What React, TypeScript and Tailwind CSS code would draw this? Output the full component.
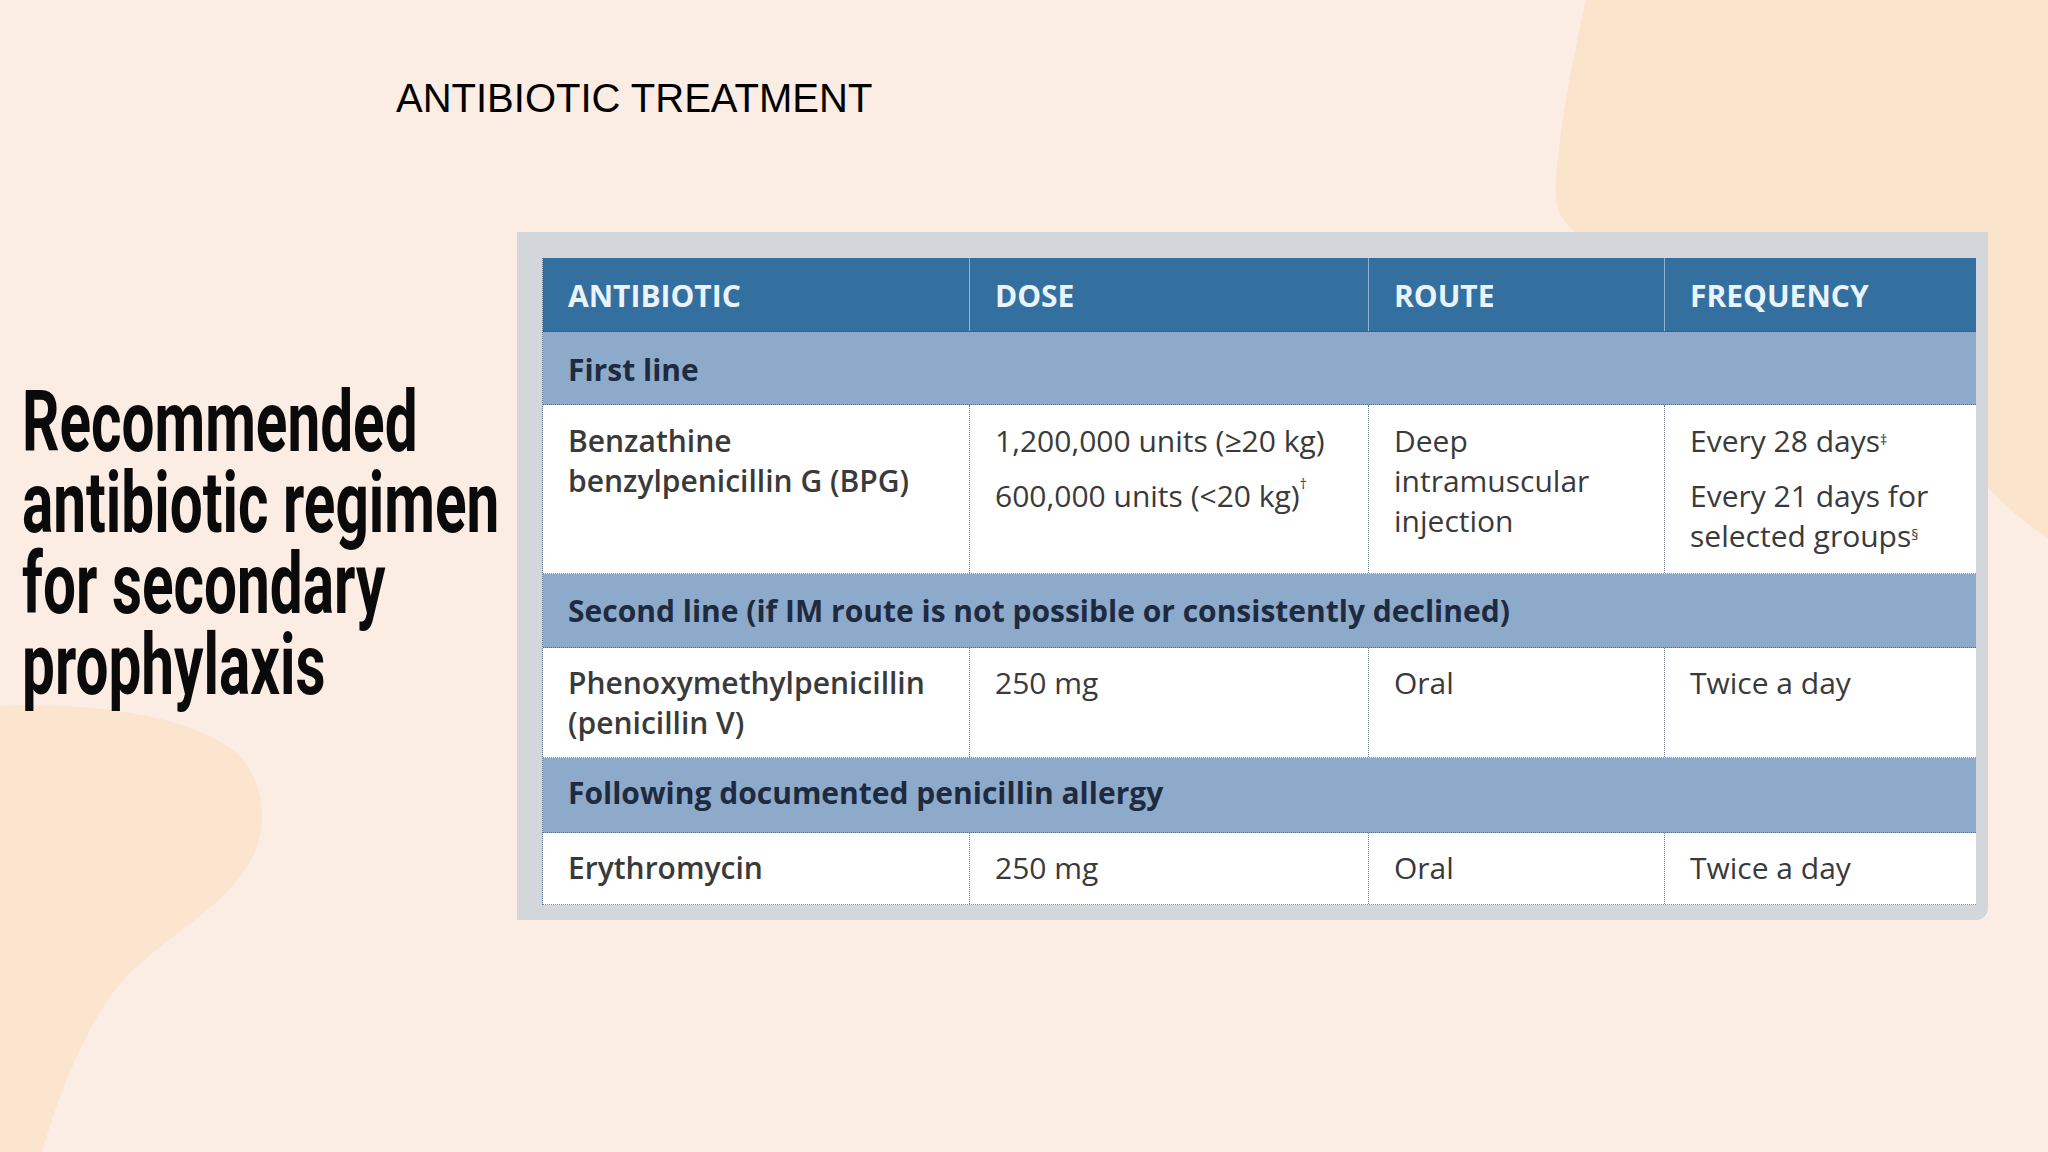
import React from "react";

const bodyFont = { fontFamily: '"Open Sans", "Liberation Sans", sans-serif' };

function Row({
  h,
  pt,
  cells,
  white = true,
}: {
  h: string;
  pt: string;
  cells: React.ReactNode[];
  white?: boolean;
}) {
  return (
    <div className={`grid grid-cols-[426px_399px_296px_313px] ${h} bg-white border-b border-dotted border-[#7d8a97]`}>
      {cells.map((c, i) => (
        <div
          key={i}
          className={`${pt} px-[25px] text-[30px] leading-[40px] text-[#3a3a3a] whitespace-nowrap ${
            i > 0 ? "border-l border-dotted border-[#6f7c88]" : ""
          } ${i === 0 ? "font-semibold text-[#2c2c2c]" : "font-normal"}`}
        >
          {c}
        </div>
      ))}
    </div>
  );
}

function Band({ h, pt, text }: { h: string; pt: string; text: string }) {
  return (
    <div className={`${h} ${pt} px-[25px] bg-[#8eaacb] border-b border-dotted border-[#5d6f82] text-[30px] leading-[40px] font-bold text-[#1d2a3f] whitespace-nowrap`}>
      {text}
    </div>
  );
}

export default function App() {
  return (
    <div className="relative w-[2048px] h-[1152px] overflow-hidden bg-[#fbede3]">
      <svg
        className="absolute inset-0"
        width="2048"
        height="1152"
        viewBox="0 0 2048 1152"
      >
        <path
          d="M1586,0 C1575,50 1560,120 1556,180 C1553,215 1565,228 1595,245 L1700,300 C1850,360 1950,450 1995,495 C2015,515 2035,530 2048,538 L2048,0 Z"
          fill="#fbe4cc"
        />
        <path
          d="M0,706 C90,702 190,715 235,752 C268,780 270,835 245,870 C215,915 150,945 115,990 C85,1030 60,1090 42,1152 L0,1152 Z"
          fill="#fbe5cf"
        />
      </svg>

      <div className="relative flex flex-col">
        <div
          className="pt-[78px] pl-[396px] text-[40px] leading-[40px] text-black"
          style={{ fontFamily: '"Liberation Sans", Arial, sans-serif' }}
        >
          ANTIBIOTIC TREATMENT
        </div>

        <div className="mt-[114px] flex pl-[22px]">
          <div className="w-[495px] pt-[149px]">
            <div
              className="origin-left scale-x-[0.68] text-[86px] leading-[81px] font-bold text-[#0a0a0a] whitespace-nowrap"
              style={{ fontFamily: 'Roboto, "Liberation Sans", sans-serif' }}
            >
              Recommended
              <br />
              antibiotic regimen
              <br />
              for secondary
              <br />
              prophylaxis
            </div>
          </div>

          <div
            className="w-[1471px] h-[688px] bg-[#d3d6db] rounded-br-[12px] pl-[25px] pt-[26px] pr-[12px] pb-[15px]"
            style={bodyFont}
          >
            <div className="w-[1434px] flex flex-col border-l border-dotted border-[#5d6f82]">
              <div className="grid grid-cols-[426px_399px_296px_313px] h-[74px] bg-[#34709f] border-b border-dotted border-[#28577d]">
                {["ANTIBIOTIC", "DOSE", "ROUTE", "FREQUENCY"].map((t, i) => (
                  <div
                    key={t}
                    className={`pt-[18px] px-[25px] text-[30px] leading-[40px] font-bold text-[#eaf3fa] ${
                      i > 0 ? "border-l border-[#8fb2d0]" : ""
                    }`}
                  >
                    {t}
                  </div>
                ))}
              </div>

              <Band h="h-[73px]" pt="pt-[18px]" text="First line" />

              <Row
                h="h-[169px]"
                pt="pt-[16px]"
                cells={[
                  <>
                    Benzathine
                    <br />
                    benzylpenicillin G (BPG)
                  </>,
                  <>
                    <div>1,200,000 units (≥20 kg)</div>
                    <div className="mt-[15px]">
                      600,000 units (&lt;20 kg)
                      <sup className="text-[14px] align-super leading-none">†</sup>
                    </div>
                  </>,
                  <>
                    Deep
                    <br />
                    intramuscular
                    <br />
                    injection
                  </>,
                  <>
                    <div>
                      Every 28 days
                      <sup className="text-[14px] leading-none">‡</sup>
                    </div>
                    <div className="mt-[15px]">
                      Every 21 days for
                      <br />
                      selected groups
                      <sup className="text-[14px] leading-none">§</sup>
                    </div>
                  </>,
                ]}
              />

              <Band
                h="h-[74px]"
                pt="pt-[17px]"
                text="Second line (if IM route is not possible or consistently declined)"
              />

              <Row
                h="h-[110px]"
                pt="pt-[15px]"
                cells={[
                  <>
                    Phenoxymethylpenicillin
                    <br />
                    (penicillin V)
                  </>,
                  "250 mg",
                  "Oral",
                  "Twice a day",
                ]}
              />

              <Band
                h="h-[75px]"
                pt="pt-[15px]"
                text="Following documented penicillin allergy"
              />

              <Row
                h="h-[72px]"
                pt="pt-[15px]"
                cells={["Erythromycin", "250 mg", "Oral", "Twice a day"]}
              />
            </div>
          </div>
        </div>
      </div>
    </div>
  );
}
